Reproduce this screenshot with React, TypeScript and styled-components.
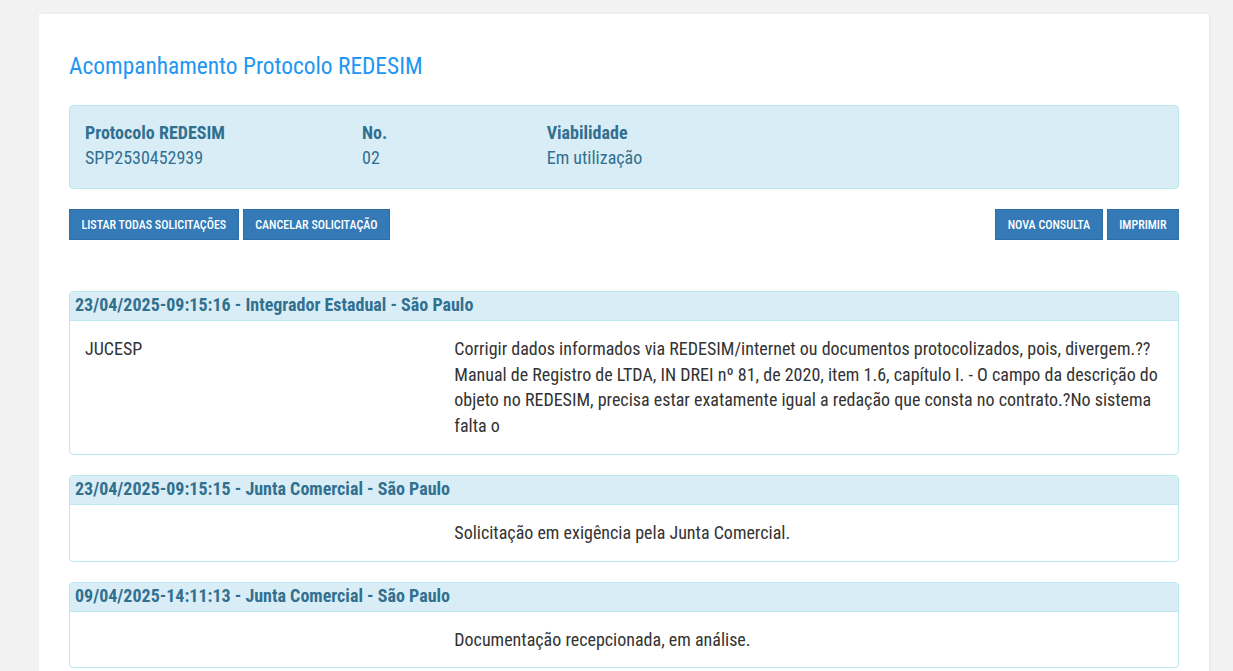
import styled, { createGlobalStyle } from "styled-components";

const GlobalStyle = createGlobalStyle`
  html, body {
    margin: 0;
    padding: 0;
    background: #f2f2f2;
  }
  body {
    font-family: "Roboto Condensed", "Liberation Sans Narrow", Roboto, sans-serif;
    font-size: 18px;
    line-height: 1.42857;
    color: #333;
  }
`;

const Page = styled.div`
  padding: 14px 24px 0 39px;
`;

const Card = styled.div`
  width: 1110px;
  background: #fff;
  padding: 30px 30px 20px;
  box-shadow: 1px 0 2px rgba(0, 0, 0, 0.06);
`;

const Title = styled.h1`
  margin: 10px 0 27px;
  font-size: 23.4px;
  font-weight: 400;
  line-height: 24px;
  color: #2196f3;
`;

const InfoBox = styled.div`
  display: grid;
  grid-template-columns: 277px 184.7px 1fr;
  padding: 14px 15px 18px;
  background: #d9edf7;
  border: 1px solid #bce8f1;
  border-radius: 4px;
  color: #31708f;
  line-height: 25px;
`;

const InfoCol = styled.div`
  display: flex;
  flex-direction: column;
`;

const InfoLabel = styled.div`
  font-weight: 700;
`;

const InfoValue = styled.div``;

const Toolbar = styled.div`
  display: flex;
  justify-content: space-between;
  margin-top: 20px;
`;

const ButtonGroup = styled.div`
  display: flex;
  gap: 4px;
`;

const Button = styled.button`
  height: 31px;
  padding: 0 11.5px;
  background: #337ab7;
  border: 1px solid #2e6da4;
  color: #fff;
  font-family: inherit;
  font-size: 12px;
  font-weight: 500;
  text-transform: uppercase;
  cursor: pointer;
`;

const Timeline = styled.div`
  display: flex;
  flex-direction: column;
  gap: 20px;
  margin-top: 51px;
`;

const Panel = styled.div`
  border: 1px solid #bce8f1;
  border-radius: 4px;
  overflow: hidden;
`;

const PanelHeader = styled.div`
  height: 28px;
  padding: 0 5px;
  line-height: 25px;
  background: #d9edf7;
  border-bottom: 1px solid #bce8f1;
  color: #31708f;
  font-weight: 700;
`;

const PanelBody = styled.div`
  display: grid;
  grid-template-columns: 369.3px 1fr;
  padding: 15px;
`;

const Cell = styled.div``;

type Entry = { head: string; org: string; text: string };

const entries: Entry[] = [
  {
    head: "23/04/2025-09:15:16 - Integrador Estadual - São Paulo",
    org: "JUCESP",
    text:
      "Corrigir dados informados via REDESIM/internet ou documentos protocolizados, pois, divergem.?? Manual de Registro de LTDA, IN DREI nº 81, de 2020, item 1.6, capítulo I. - O campo da descrição do objeto no REDESIM, precisa estar exatamente igual a redação que consta no contrato.?No sistema falta o",
  },
  {
    head: "23/04/2025-09:15:15 - Junta Comercial - São Paulo",
    org: "",
    text: "Solicitação em exigência pela Junta Comercial.",
  },
  {
    head: "09/04/2025-14:11:13 - Junta Comercial - São Paulo",
    org: "",
    text: "Documentação recepcionada, em análise.",
  },
];

export default function App() {
  return (
    <>
      <GlobalStyle />
      <Page>
        <Card>
          <Title>Acompanhamento Protocolo REDESIM</Title>
          <InfoBox>
            <InfoCol>
              <InfoLabel>Protocolo REDESIM</InfoLabel>
              <InfoValue>SPP2530452939</InfoValue>
            </InfoCol>
            <InfoCol>
              <InfoLabel>No.</InfoLabel>
              <InfoValue>02</InfoValue>
            </InfoCol>
            <InfoCol>
              <InfoLabel>Viabilidade</InfoLabel>
              <InfoValue>Em utilização</InfoValue>
            </InfoCol>
          </InfoBox>
          <Toolbar>
            <ButtonGroup>
              <Button>Listar todas solicitações</Button>
              <Button>Cancelar solicitação</Button>
            </ButtonGroup>
            <ButtonGroup>
              <Button>Nova consulta</Button>
              <Button>Imprimir</Button>
            </ButtonGroup>
          </Toolbar>
          <Timeline>
            {entries.map((e) => (
              <Panel key={e.head}>
                <PanelHeader>{e.head}</PanelHeader>
                <PanelBody>
                  <Cell>{e.org}</Cell>
                  <Cell>{e.text}</Cell>
                </PanelBody>
              </Panel>
            ))}
          </Timeline>
        </Card>
      </Page>
    </>
  );
}
